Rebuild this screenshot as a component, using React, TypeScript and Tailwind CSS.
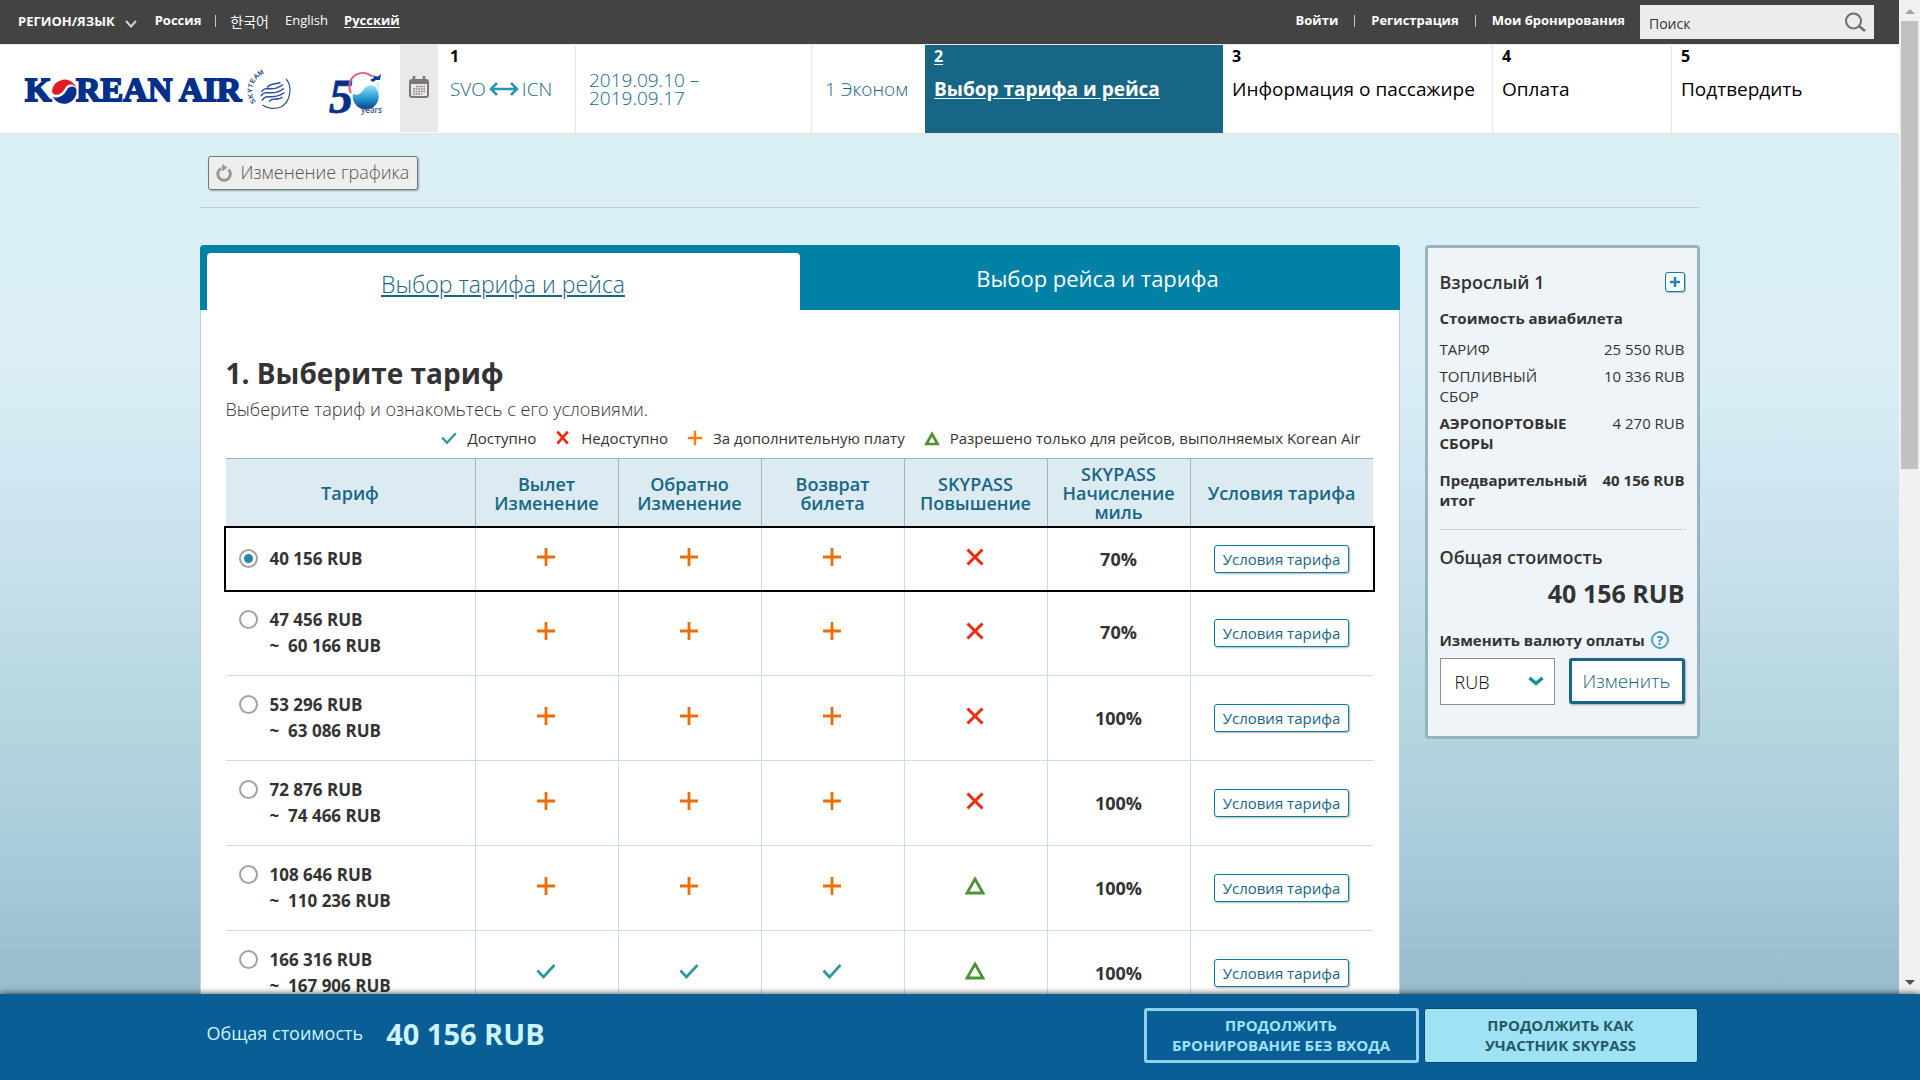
import React, { useState } from "react";

type Mark = "plus" | "cross" | "triangle" | "check";

interface Fare {
  from: string;
  to?: string;
  marks: [Mark, Mark, Mark, Mark];
  miles: string;
}

const fares: Fare[] = [
  { from: "40 156 RUB", marks: ["plus", "plus", "plus", "cross"], miles: "70%" },
  { from: "47 456 RUB", to: "60 166 RUB", marks: ["plus", "plus", "plus", "cross"], miles: "70%" },
  { from: "53 296 RUB", to: "63 086 RUB", marks: ["plus", "plus", "plus", "cross"], miles: "100%" },
  { from: "72 876 RUB", to: "74 466 RUB", marks: ["plus", "plus", "plus", "cross"], miles: "100%" },
  { from: "108 646 RUB", to: "110 236 RUB", marks: ["plus", "plus", "plus", "triangle"], miles: "100%" },
  { from: "166 316 RUB", to: "167 906 RUB", marks: ["check", "check", "check", "triangle"], miles: "100%" },
];

const markNames: Record<Mark, string> = {
  plus: "За дополнительную плату",
  cross: "Недоступно",
  triangle: "Разрешено только для рейсов, выполняемых Korean Air",
  check: "Доступно",
};

function MarkIcon({ mark, small }: { mark: Mark; small?: boolean }) {
  const size = small ? "h-4 w-4" : "h-5 w-5";
  return (
    <svg
      viewBox="0 0 20 20"
      fill="none"
      role="img"
      aria-label={markNames[mark]}
      className={`${size} inline-block shrink-0 align-middle`}
    >
      {mark === "plus" && (
        <path d="M10 1V19M1 10H19" stroke={small ? "#ff7a0f" : "#ee6c05"} strokeWidth={small ? 3 : 2.8} />
      )}
      {mark === "cross" && (
        <path
          d={small ? "M3 2L16 17M16 2L3 17" : "M2.5 2.5L17.5 17.5M17.5 2.5L2.5 17.5"}
          stroke="#ee2b12"
          strokeWidth={small ? 3.4 : 3}
        />
      )}
      {mark === "triangle" && (
        <path d={small ? "M10 5L17 17.500H3Z" : "M10 3L18 17H2Z"} stroke="#4c9335" strokeWidth={small ? 3.4 : 2.8} />
      )}
      {mark === "check" && (
        <path d="M1.500 9.500L7.500 16L18.500 4" stroke="#32999a" strokeWidth={small ? 3 : 2.8} />
      )}
    </svg>
  );
}

function KoreanAirLogo() {
  return (
    <svg viewBox="0 -12 366 72" className="h-[72px] w-[366px] shrink-0" role="img" aria-label="Korean Air">
      <defs>
        <linearGradient id="globe" x1="0" y1="0" x2="0" y2="1">
          <stop offset="0" stopColor="#8fe2f4" />
          <stop offset="0.5" stopColor="#2a9fd2" />
          <stop offset="1" stopColor="#0b3d8c" />
        </linearGradient>
        <path id="skyteam-arc" d="M236 37A17 17 0 0 1 266 15" />
      </defs>
      <g fill="#04308a" stroke="#04308a" strokeWidth="1.800" fontFamily="Liberation Serif, serif" fontWeight="700" fontSize="34">
        <text x="5" y="36">K</text>
        <text x="56" y="36">REAN AIR</text>
      </g>
      <circle cx="44" cy="25" r="13.500" fill="#fff" />
      <g transform="translate(1 1)">
        <path d="M31 26A12.500 12.500 0 0 1 55.500 22.500C54 18 47 16.500 44.500 21.500C42 27.500 34.500 32 31 26Z" fill="#e51b24" />
        <path d="M55.500 23.500A12.500 12.500 0 0 1 32 31C37 33 43.500 29 45.500 24.500C47.500 19.500 54 19.500 55.500 23.500Z" fill="#04308a" />
        <path d="M31.500 30A13 13 0 0 0 40 36.500C36.500 35 34 33 31.500 30Z" fill="#04308a" />
      </g>
      <g fill="none" stroke="#2c4f97">
        <path d="M266 14C272 20 271.500 35 262 41.500C256 44.500 248 44 242.500 40" strokeWidth="1.200" />
        <path d="M241.500 27C246 19 250 29 263 19.500M241 31C246 23 251 33 264 23.500M242 35.500C247 27 252 36.500 264.500 27.500M249 36.500C254 31 256 37 262.500 32M247 22.500C252 17 255 20 260.500 17.500" strokeWidth="1.500" />
      </g>
      <text fill="#2c4f97" fontFamily="Liberation Sans, sans-serif" fontWeight="700" fontSize="7">
        <textPath href="#skyteam-arc">SKYTEAM</textPath>
      </text>
      <text x="309" y="48" fill="#04308a" stroke="#04308a" strokeWidth="0.800" fontFamily="Liberation Serif, serif" fontWeight="700" fontStyle="italic" fontSize="48">5</text>
      <path d="M331 28A13.500 13.500 0 0 1 352 11.500" fill="none" stroke="#ef5a78" strokeWidth="1.800" />
      <path d="M357 17A13.500 13.500 0 0 1 356 30" fill="none" stroke="#bfeaf5" strokeWidth="1.500" />
      <path d="M357 25A13 13 0 1 1 333 29C337 31 341 29 344 24C348 19 355 19 357 25Z" fill="url(#globe)" />
      <path d="M350 15L354 12.500L352 10L355 11L358 11.500L361 9L360 15L356 15L353 17Z" fill="#153f8f" />
      <text x="341" y="48" fill="#35548f" fontFamily="Open Sans, sans-serif" fontWeight="600" fontSize="8">years</text>
    </svg>
  );
}

function CalendarIcon() {
  return (
    <svg viewBox="0 0 20 22" className="mb-1 h-[22px] w-5" aria-hidden="true">
      <rect x="1" y="4" width="18" height="17" rx="2" fill="#e9e9e8" stroke="#7d7877" strokeWidth="2" />
      <path d="M1 4H19V8H1Z" fill="#7d7877" />
      <path d="M5 0V6M15 0V6" stroke="#7d7877" strokeWidth="2.600" />
      <path d="M7 10.500H16M4 13H16M4 15.500H16M4 18H13" stroke="#8b8786" strokeWidth="1.500" strokeDasharray="1.800 0.800" />
    </svg>
  );
}

function TopBar() {
  return (
    <div className="flex h-11 shrink-0 items-center bg-[#434343] pr-[25px] pl-[18px] text-[13px] text-white">
      <button type="button" className="flex items-center gap-[10px] font-bold">
        РЕГИОН/ЯЗЫК
        <svg viewBox="0 0 12 8" className="mt-1 h-2 w-3" fill="none" aria-hidden="true">
          <path d="M1 1L6 6.500L11 1" stroke="#d0d0d0" strokeWidth="2" />
        </svg>
      </button>
      <div className="ml-[18px] flex items-center pb-[2px]">
        <span className="font-bold">Россия</span>
        <span className="ml-[14px] h-3 w-px bg-[#c8c8c8]" />
        <a href="#ko" className="ml-[14px] text-[14px]">한국어</a>
        <a href="#en" className="ml-4">English</a>
        <a href="#ru" className="ml-4 font-bold underline underline-offset-2">Русский</a>
      </div>
      <nav className="ml-auto flex items-center gap-4 pb-[2px] font-bold">
        <a href="#login">Войти</a>
        <span className="h-3 w-px bg-[#c8c8c8]" />
        <a href="#register">Регистрация</a>
        <span className="h-3 w-px bg-[#c8c8c8]" />
        <a href="#bookings">Мои бронирования</a>
      </nav>
      <form className="ml-[15px] flex h-[34px] w-[234px] items-center bg-[#ececec] pr-2 pl-[9px]" onSubmit={(e) => e.preventDefault()}>
        <input
          aria-label="Поиск"
          placeholder="Поиск"
          className="min-w-0 flex-1 bg-transparent pt-[2px] text-[14px] text-[#333] outline-none placeholder:text-[#333]"
        />
        <button type="submit" aria-label="Найти">
          <svg viewBox="0 0 22 20" className="h-5 w-[22px]" fill="none" stroke="#6e6e6e" aria-hidden="true">
            <circle cx="9.500" cy="9" r="7.500" strokeWidth="2" />
            <path d="M15 14L21 19" strokeWidth="2.500" />
          </svg>
        </button>
      </form>
    </div>
  );
}

function Step({ n, label, width }: { n: string; label: string; width: string }) {
  return (
    <li className={`${width} border-r border-[#e6e6e6] pl-[9px] last:border-r-0`}>
      <span className="block pt-px text-[16px] leading-5 font-bold">{n}</span>
      <span className="mt-[11px] block text-[19px] leading-6 font-normal">{label}</span>
    </li>
  );
}

function StepsBar() {
  return (
    <header className="flex h-[91px] shrink-0 border-t border-b-2 border-[#e6e6e6] bg-white text-black">
      <div className="flex w-[400px] shrink-0 items-center pl-5">
        <KoreanAirLogo />
      </div>
      <button type="button" aria-label="Календарь" className="mb-px flex w-[38px] shrink-0 items-center justify-center bg-[#e9e9e8]">
        <CalendarIcon />
      </button>
      <ol className="flex flex-1">
        <li className="flex w-[487px] shrink-0">
          <a href="#route" className="w-[138px] border-r border-[#e6e6e6] pl-[12px]">
            <span className="block pt-px text-[16px] leading-5 font-bold">1</span>
            <span className="mt-[11px] flex items-center gap-[3px] text-[19px] leading-6 font-light text-[#186685]">
              SVO
              <svg viewBox="0 0 30 14" className="h-[14px] w-[30px]" fill="none" stroke="#2b93b1" strokeWidth="2.500" aria-hidden="true">
                <path d="M2 7H28M8 1L2 7L8 13M22 1L28 7L22 13" />
              </svg>
              ICN
            </span>
          </a>
          <span className="w-[236px] border-r border-[#e6e6e6] pt-[26px] pl-[13px] text-[19px] leading-[18px] font-light text-[#186685]">
            2019.09.10 –
            <br />
            2019.09.17
          </span>
          <span className="flex-1 pt-8 pl-[13px] text-[19px] leading-6 font-light text-[#186685]">1 Эконом</span>
        </li>
        <li className="w-[298px] shrink-0 bg-[#186685] pl-[9px] text-white">
          <span className="block pt-px text-[16px] leading-5 font-bold underline underline-offset-2">2</span>
          <span className="mt-[11px] block text-[19px] leading-6 font-bold underline underline-offset-2">Выбор тарифа и рейса</span>
        </li>
        <Step n="3" label="Информация о пассажире" width="w-[270px]" />
        <Step n="4" label="Оплата" width="w-[179px]" />
        <Step n="5" label="Подтвердить" width="flex-1" />
      </ol>
    </header>
  );
}

function FareTable() {
  const [selected, setSelected] = useState(0);
  return (
    <table className="mt-[10px] w-full table-fixed border-separate border-spacing-0 text-center text-[#333]">
      <colgroup>
        <col className="w-[250px]" />
        <col className="w-[143px]" />
        <col className="w-[143px]" />
        <col className="w-[143px]" />
        <col className="w-[143px]" />
        <col className="w-[143px]" />
        <col />
      </colgroup>
      <thead>
        <tr className="h-[70px] bg-[#dceaf1] text-[18px] leading-[19px] text-[#186685] [&>th]:border-t [&>th]:border-r [&>th]:border-[#98b7be] [&>th]:font-semibold [&>th:last-child]:border-r-0">
          <th scope="col">Тариф</th>
          <th scope="col">Вылет<br />Изменение</th>
          <th scope="col">Обратно<br />Изменение</th>
          <th scope="col">Возврат<br />билета</th>
          <th scope="col">SKYPASS<br />Повышение</th>
          <th scope="col">SKYPASS<br />Начисление<br />миль</th>
          <th scope="col">Условия тарифа</th>
        </tr>
      </thead>
      <tbody className="text-[17px] font-bold [&_td]:border-r [&_td]:border-b [&_td]:border-[#cddcdf] [&_td:last-child]:border-r-0">
        {fares.map((fare, i) => (
          <tr
            key={fare.from}
            className={`${i === 0 ? "h-[62px] [&>td]:border-b-0" : i === 1 ? "h-[86px]" : "h-[85px]"} ${
              selected === i ? "outline-2 outline-black" : ""
            }`}
          >
            <td className="p-0 pl-[13px]">
              <label className="flex gap-3 text-left leading-[26px]">
                <input
                  type="radio"
                  name="fare"
                  checked={selected === i}
                  onChange={() => setSelected(i)}
                  className="mt-[3px] h-[19px] w-[19px] shrink-0 appearance-none rounded-full border-2 border-[#a3a3a3] bg-white checked:bg-[radial-gradient(circle,#2089ad_0_4px,#fff_5px)]"
                />
                <span>
                  {fare.from}
                  {fare.to && <span className="block">~&nbsp; {fare.to}</span>}
                </span>
              </label>
            </td>
            {fare.marks.map((mark, j) => (
              <td key={j} className="p-0 pr-[2px] pb-[7px]">
                <MarkIcon mark={mark} />
              </td>
            ))}
            <td className="p-0 text-[18px]">{fare.miles}</td>
            <td className="p-0">
              <button
                type="button"
                className="h-7 rounded-[3px] border border-[#0080a6] bg-white px-2 text-[15px] leading-6 font-normal text-[#186685] shadow-[1px_1px_2px_rgba(0,0,0,0.3)]"
              >
                Условия тарифа
              </button>
            </td>
          </tr>
        ))}
      </tbody>
    </table>
  );
}

function FarePanel() {
  return (
    <section className="min-w-0 flex-1">
      <div role="tablist" className="flex h-[65px] rounded-t bg-[#0081a5] pt-2 pl-[7px]">
        <button type="button" role="tab" aria-selected="true" className="w-[593px] rounded-t bg-white pt-[5px] text-[23px] font-light text-[#186685] underline decoration-2 underline-offset-2">
          Выбор тарифа и рейса
        </button>
        <button type="button" role="tab" aria-selected="false" className="flex-1 pr-1 pb-[7px] text-[22px] text-white">
          Выбор рейса и тарифа
        </button>
      </div>
      <div className="border-x border-[#c5d0d6] bg-white pt-[44px] pr-[26px] pb-10 pl-[25px] text-[#333]">
        <h1 className="text-[28px] leading-[38px] font-bold">1. Выберите тариф</h1>
        <p className="mt-[5px] text-[18px] leading-6 font-light">Выберите тариф и ознакомьтесь с его условиями.</p>
        <ul className="mt-[7px] flex h-5 items-center justify-end gap-[19px] pr-[12px] text-[15px] leading-5">
          {(["check", "cross", "plus", "triangle"] as Mark[]).map((mark) => (
            <li key={mark} className="flex items-center gap-[10px]">
              <MarkIcon mark={mark} small />
              {markNames[mark]}
            </li>
          ))}
        </ul>
        <FareTable />
      </div>
    </section>
  );
}

function PriceRow({ label, value, bold, boldValue }: { label: string; value: string; bold?: boolean; boldValue?: boolean }) {
  return (
    <div className="flex justify-between">
      <dt className={bold ? "w-[150px] font-bold" : "w-[110px]"}>{label}</dt>
      <dd className={`whitespace-nowrap ${boldValue ? "font-bold" : ""}`}>{value}</dd>
    </div>
  );
}

function Summary() {
  return (
    <aside className="w-[275px] shrink-0 rounded border-3 border-[#98b3bb] bg-[#eff4f9] px-3 pt-[22px] pb-[31px] text-[15px] leading-5 text-[#333]">
      <div className="flex items-center justify-between">
        <h2 className="text-[18px] leading-6 font-semibold">Взрослый 1</h2>
        <button
          type="button"
          aria-label="Показать подробности"
          className="flex h-5 w-5 items-center justify-center rounded-[3px] border border-[#0080a6] bg-white shadow-[1px_1px_1px_rgba(0,0,0,0.25)]"
        >
          <svg viewBox="0 0 10 10" className="h-[10px] w-[10px]" aria-hidden="true">
            <path d="M5 0V10M0 5H10" stroke="#2089ad" strokeWidth="2.500" />
          </svg>
        </button>
      </div>
      <h3 className="mt-[14px] font-bold">Стоимость авиабилета</h3>
      <dl className="mt-[11px] flex flex-col gap-[7px]">
        <PriceRow label="ТАРИФ" value="25 550 RUB" />
        <PriceRow label="ТОПЛИВНЫЙ СБОР" value="10 336 RUB" />
        <PriceRow label="АЭРОПОРТОВЫЕ СБОРЫ" value="4 270 RUB" bold />
        <div className="mt-[10px]">
          <PriceRow label="Предварительный итог" value="40 156 RUB" bold boldValue />
        </div>
      </dl>
      <div className="mt-[19px] border-t border-dotted border-[#98b3bb] pt-[15px]">
        <h3 className="text-[18px] leading-6 font-semibold">Общая стоимость</h3>
        <p className="mt-2 text-right text-[25px] leading-8 font-bold">40 156 RUB</p>
      </div>
      <div className="mt-[21px] flex items-center gap-[6px]">
        <label htmlFor="currency" className="font-bold">Изменить валюту оплаты</label>
        <button type="button" aria-label="Справка" className="flex h-[18px] w-[18px] items-center justify-center rounded-full border-2 border-[#4ba5bd] text-[13px] leading-none font-bold text-[#2b93b1]">
          ?
        </button>
      </div>
      <div className="mt-2 flex justify-between">
        <div className="relative h-[47px] w-[115px]">
          <select id="currency" className="h-full w-full appearance-none border border-[#8d8f92] bg-white pl-[14px] text-[18px] font-light text-black">
            <option>RUB</option>
          </select>
          <svg viewBox="0 0 16 10" className="pointer-events-none absolute top-[18px] right-[11px] h-[10px] w-4" fill="none" aria-hidden="true">
            <path d="M1.500 2L8 7.500L14.500 2" stroke="#2089ad" strokeWidth="3.500" />
          </svg>
        </div>
        <button type="button" className="h-[46px] w-[116px] rounded-[3px] border-3 border-[#186685] bg-white text-[19px] font-light text-[#186685] shadow-[1px_1px_2px_rgba(0,0,0,0.3)]">
          Изменить
        </button>
      </div>
    </aside>
  );
}

function ScrollTrack() {
  return (
    <div className="flex w-[21px] shrink-0 flex-col items-center bg-[#f1f1f1]" aria-hidden="true">
      <svg viewBox="0 0 10 5" className="mt-[9px] h-[5px] w-[10px]">
        <path d="M5 0L10 5H0Z" fill="#a3a3a3" />
      </svg>
      <div className="mt-[7px] h-[448px] w-[17px] bg-[#c1c1c1]" />
      <svg viewBox="0 0 10 5" className="mt-auto mb-[9px] h-[5px] w-[10px]">
        <path d="M5 5L10 0H0Z" fill="#505050" />
      </svg>
    </div>
  );
}

function TotalBar() {
  return (
    <footer className="relative shrink-0 bg-[#085e95] pr-[21px] shadow-[0_-1px_6px_rgba(0,0,0,0.6)]">
      <div className="mx-auto flex h-[86px] max-w-[1500px] items-center gap-[5px] pr-[2px] pb-[3px] pl-[7px] text-[#cdf3ff]">
        <span className="pb-1 text-[18px]">Общая стоимость</span>
        <strong className="ml-[18px] pb-1 text-[29px]">40 156 RUB</strong>
        <button type="button" className="ml-auto h-[55px] w-[275px] rounded-[3px] border-3 border-[#8fd0ee] pb-[2px] text-[15px] leading-5 font-bold text-[#a0e2f5]">
          ПРОДОЛЖИТЬ
          <br />
          БРОНИРОВАНИЕ БЕЗ ВХОДА
        </button>
        <button type="button" className="h-[55px] w-[274px] rounded-[3px] border border-[#0a4a6c] bg-[#a0e2f5] pb-[2px] text-[15px] leading-5 font-bold text-[#245a68]">
          ПРОДОЛЖИТЬ КАК
          <br />
          УЧАСТНИК SKYPASS
        </button>
      </div>
    </footer>
  );
}

export default function App() {
  return (
    <div className="flex h-screen flex-col overflow-hidden font-['Open_Sans','Noto_Sans_CJK_KR',sans-serif]">
      <div className="flex min-h-0 flex-1">
        <div className="flex min-w-0 flex-1 flex-col">
          <TopBar />
          <StepsBar />
          <main className="min-h-0 flex-1 overflow-hidden bg-[linear-gradient(#dbeff7_0%,#dbeef6_27%,#cbe3ee_46%,#b4d4de_70%,#aacbdb_83%,#98bccd_100%)]">
            <div className="mx-auto max-w-[1500px]">
              <div className="border-b border-[#c3cfd5] px-2 pt-[21px] pb-[17px]">
                <button
                  type="button"
                  className="flex h-[34px] items-center gap-2 rounded-[3px] border border-[#777] bg-[#eee] pr-2 pb-px pl-[6px] text-[18px] font-light text-[#555] shadow-[1px_1px_2px_rgba(0,0,0,0.3)]"
                >
                  <svg viewBox="0 0 18 18" className="h-[18px] w-[18px]" fill="none" aria-hidden="true">
                    <path d="M6 4.500A6.300 6.300 0 1 0 13.500 5.500" stroke="#999" strokeWidth="3" />
                    <path d="M7 0L12.500 3.500L7 7.500Z" fill="#999" />
                  </svg>
                  Изменение графика
                </button>
              </div>
              <div className="mt-[37px] flex items-start gap-[25px]">
                <FarePanel />
                <Summary />
              </div>
            </div>
          </main>
        </div>
        <ScrollTrack />
      </div>
      <TotalBar />
    </div>
  );
}
